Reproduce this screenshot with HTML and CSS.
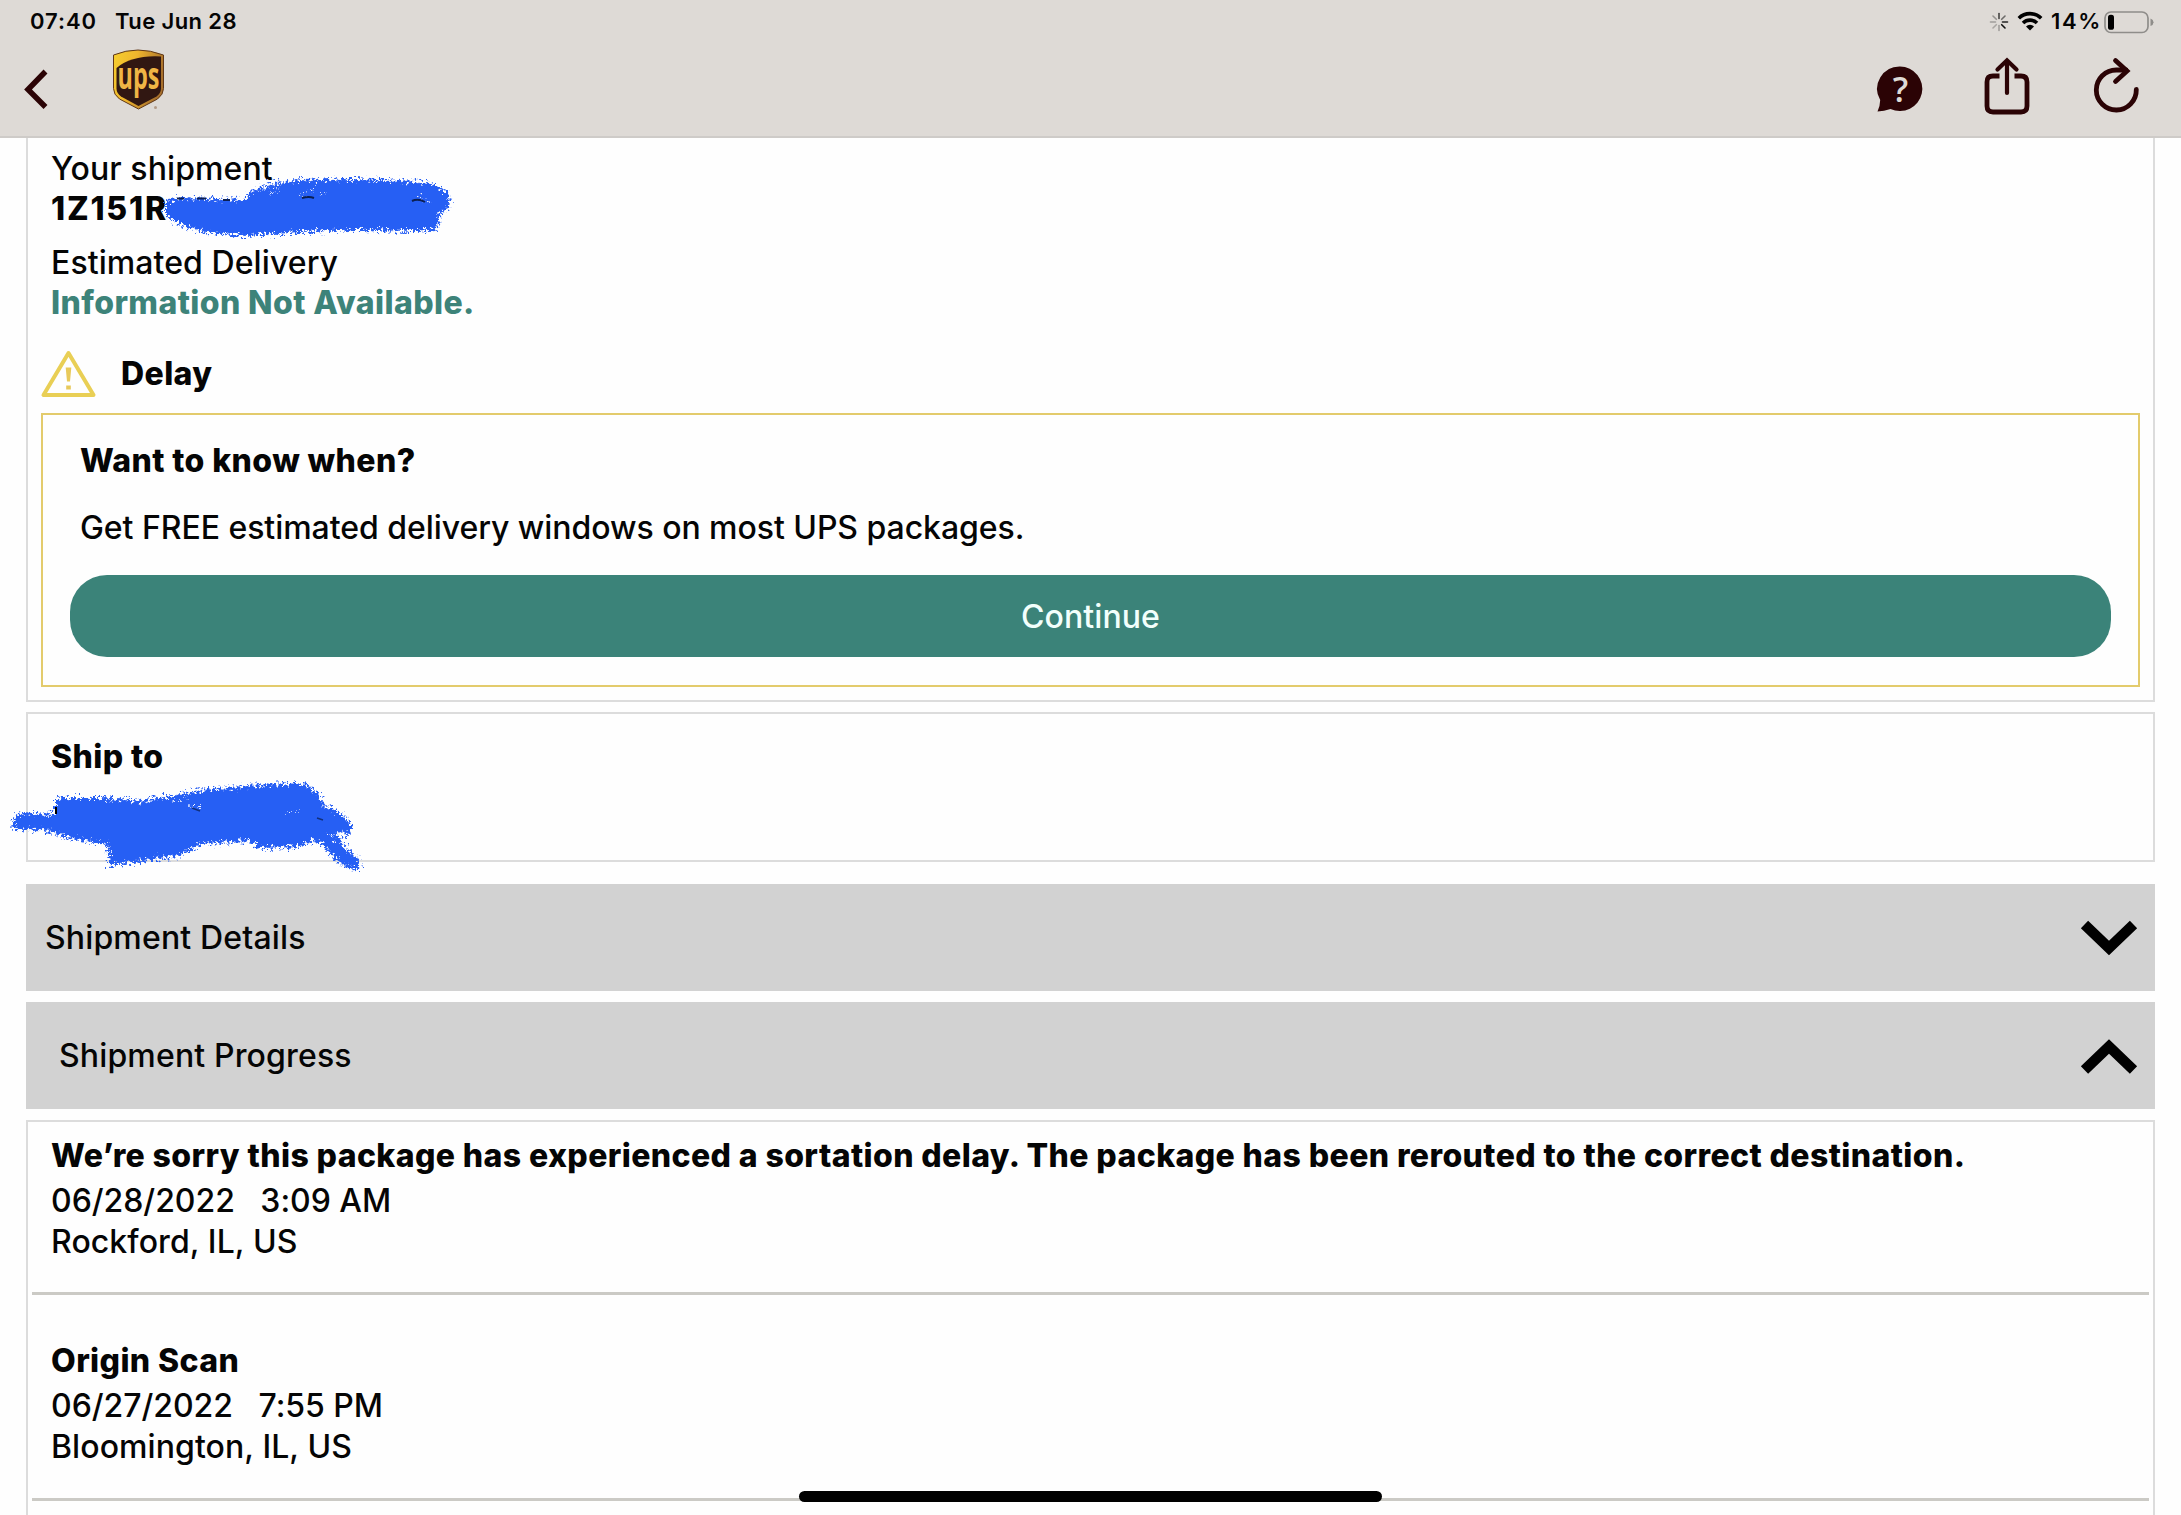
FILE: index.html
```html
<!DOCTYPE html>
<html lang="en">
<head>
    <meta charset="UTF-8">
    <meta name="viewport" content="width=device-width, initial-scale=1.0">
    <title>UPS Tracking</title>
    <link rel="stylesheet" href="styles.css">
</head>
<body>

    <header class="header">
        <div class="status-bar">
            <div class="status-left">
                <span class="time">07:40</span>
                <span class="date">Tue Jun 28</span>
            </div>
            <div class="status-right">
                <svg class="spinner" width="20" height="20" viewBox="0 0 20 20" stroke="#111" stroke-width="1.6" stroke-linecap="round">
                    <path d="M10 1.5v5" opacity=".75"/>
                    <path d="M16 4l-3.3 3.3" opacity=".55"/>
                    <path d="M18.5 10h-5" opacity=".9"/>
                    <path d="M16 16l-3.3-3.3"/>
                    <path d="M10 18.5v-5" opacity=".3"/>
                    <path d="M4 16l3.3-3.3" opacity=".25"/>
                    <path d="M1.5 10h5" opacity=".3"/>
                    <path d="M4 4l3.3 3.3" opacity=".35"/>
                </svg>
                <svg class="wifi" width="26" height="20" viewBox="0 0 26 20" fill="none" stroke="#000" stroke-width="3.6">
                    <path d="M1.8 7.2a16 16 0 0 1 22.4 0"/>
                    <path d="M6 12a10 10 0 0 1 14 0"/>
                    <path d="M13 19.5l-4-4a5.600 5.600 0 0 1 8 0z" fill="#000" stroke="none"/>
                </svg>
                <span class="percent">14%</span>
                <svg class="battery" width="50" height="23" viewBox="0 0 50 23">
                    <rect x="1" y="1" width="43" height="20.5" rx="6" fill="none" stroke="#8f8d8a" stroke-width="1.7"/>
                    <rect x="4" y="3.800" width="6" height="15" rx="2.600" fill="#000"/>
                    <path d="M46.500 7.500q3 1.200 3 3.800t-3 3.800z" fill="#8f8d8a"/>
                </svg>
            </div>
        </div>
        <nav class="nav-bar">
            <svg class="back" width="24" height="40" viewBox="0 0 24 40" fill="none" stroke="#2b0305" stroke-width="5.5">
                <path d="M21.500 2.500L4 20.500L21.500 38"/>
            </svg>
            <svg class="logo" width="54" height="62" viewBox="0 0 54 62">
                <defs>
                    <linearGradient id="gold" x1="0" y1="0" x2="1" y2="0.3">
                        <stop offset="0" stop-color="#f6cf2e"/>
                        <stop offset="0.45" stop-color="#efb52d"/>
                        <stop offset="1" stop-color="#a8702c"/>
                    </linearGradient>
                </defs>
                <path d="M1.500 6Q14 1 26 1t25.500 5v33.500q0 6-6 10.500L26.500 60L7.500 50q-6-4.500-6-10.500z" fill="url(#gold)" stroke="#5f3718" stroke-width="1"/>
                <path d="M4.500 19Q20 6 49 7.500v32q0 4.500-4.500 8L26.500 57L9 47.500q-4.500-3.500-4.500-8z" fill="#311712"/>
                <text x="5.500" y="39.500" class="logo-text" textLength="42" lengthAdjust="spacingAndGlyphs">ups</text>
                <circle cx="43.500" cy="58.500" r="1.500" fill="#b39c88"/>
            </svg>
            <div class="actions">
                <svg class="help" width="46" height="46" viewBox="0 0 46 46">
                    <path d="M23 .5a22.500 22.300 0 1 1-9.500 42.600Q7 45.500.5 45.500Q3 41 3.200 34A22.500 22.300 0 0 1 23 .5z" fill="#2b0305"/>
                    <text x="23.500" y="36" text-anchor="middle" class="help-text">?</text>
                </svg>
                <svg class="share" width="46" height="58" viewBox="0 0 46 58" fill="none" stroke="#2b0305" stroke-width="4.8">
                    <path d="M15.500 19H9q-6 0-6 6v24q0 6 6 6h28q6 0 6-6V25q0-6-6-6h-6.500"/>
                    <path d="M23 36V4M13.500 12.500L23 3.300l9.500 9.200" stroke-width="4.200" stroke-linecap="round"/>
                </svg>
                <svg class="refresh" width="46" height="56" viewBox="0 0 46 56" fill="none" stroke="#2b0305" stroke-width="4.8" stroke-linecap="round">
                    <path d="M42.300 32.500A20 20 0 1 1 22.500 13h9.500"/>
                    <path d="M21.500 3.500l11.500 10.500l-11.500 10.500"/>
                </svg>
            </div>
        </nav>
    </header>

    <main class="content">
        <section class="panel shipment">
            <p>Your shipment</p>
            <p class="bold tracking">1Z151R</p>
            <p class="estimated">Estimated Delivery</p>
            <p class="bold unavailable">Information Not Available.</p>
            <div class="delay">
                <svg class="warning" width="56" height="48" viewBox="0 0 56 48">
                    <path d="M27.500 3L2.500 45h50z" fill="none" stroke="#e9cf55" stroke-width="4" stroke-linejoin="round"/>
                    <path d="M24.700 17.500h5.600l-1.300 14h-3z" fill="#e8c95a"/>
                    <rect x="25.200" y="35.500" width="4.600" height="4" fill="#e8c95a"/>
                </svg>
                <p class="bold">Delay</p>
            </div>
            <div class="promo">
                <p class="bold">Want to know when?</p>
                <p class="promo-text">Get FREE estimated delivery windows on most UPS packages.</p>
                <button class="continue" type="button">Continue</button>
            </div>
            <svg class="scribble scribble-number" width="300" height="76" viewBox="160 168 300 76">
                <defs>
                    <filter id="rough" x="-10%" y="-20%" width="120%" height="140%">
                        <feTurbulence type="fractalNoise" baseFrequency="0.35" numOctaves="2" seed="4" result="noise"/>
                        <feDisplacementMap in="SourceGraphic" in2="noise" scale="14" xChannelSelector="R" yChannelSelector="G"/>
                    </filter>
                </defs>
                <g filter="url(#rough)">
                    <path d="M166 201l14-3l66 2l2-7l20-9l32-4l50-1l35 1l45 3l16 9l2 13l-10 7l-2 15l-20 2l-60-1l-56 2l-55 4l-37-3l-28-8l-14-9z" fill="#285ff4" stroke="#285ff4" stroke-width="4" stroke-dasharray="2 2"/>
                    <path d="M258 190l22-7M300 193l14-5M320 194l8-3M418 196l14 7M268 193l10-4" stroke="#fff" stroke-width="1.200" stroke-dasharray="2 3"/>
                </g>
                <path d="M176 197.500h7M196 197.500h9M222 199h7M301 197q7-2 12 0M411 200q6-3 13 1" fill="none" stroke="#0b1f52" stroke-width="2"/>
            </svg>
        </section>

        <section class="panel ship-to">
            <p class="bold">Ship to</p>
            <svg class="scribble scribble-address" width="370" height="100" viewBox="0 776 370 100">
                <g filter="url(#rough)">
                    <path d="M14 815l12-2l29 1v-16l46 0l40 3l60-11l70-6h33l15 13l2 9l14 4l14 14l-3 9l-14-3l10 17l15 14l-2 7l-14-4l-19-20l-10-6l-16 7l-38 1l-12-7l-45 3l-25 12l-67 9l-2-20l-40-7l-25-8l-31-1z" fill="#285ff4" stroke="#285ff4" stroke-width="4" stroke-dasharray="2 2"/>
                    <path d="M170 800l16-3M186 805l14 1M284 811l12-1M326 832l8 10" stroke="#fff" stroke-width="1.200" stroke-dasharray="2 3"/>
                </g>
                <path d="M54 806v7" stroke="#000" stroke-width="2"/>
                <path d="M190 807l8 3M315 817l6 2" stroke="#12307c" stroke-width="1.500"/>
            </svg>
        </section>

        <div class="bar details">
            <span>Shipment Details</span>
            <svg width="58" height="37" viewBox="0 0 58 37" fill="none" stroke="#000" stroke-width="10.5">
                <path d="M4.500 4.500L29 28L53.500 4.500"/>
            </svg>
        </div>
        <div class="bar progress">
            <span>Shipment Progress</span>
            <svg width="58" height="37" viewBox="0 0 58 37" fill="none" stroke="#000" stroke-width="10.5">
                <path d="M4.500 32L29 8.500L53.500 32"/>
            </svg>
        </div>

        <section class="panel events">
            <div class="event">
                <p class="bold">We’re sorry this package has experienced a sortation delay. The package has been rerouted to the correct destination.</p>
                <p class="event-time">06/28/2022&nbsp;&nbsp; 3:09 AM</p>
                <p>Rockford, IL, US</p>
            </div>
            <div class="event">
                <p class="bold">Origin Scan</p>
                <p class="event-time">06/27/2022&nbsp;&nbsp; 7:55 PM</p>
                <p>Bloomington, IL, US</p>
            </div>
        </section>
    </main>

    <div class="home-indicator"></div>

</body>
</html>
```
FILE: styles.css
```css
* {
    box-sizing: border-box;
}
body {
    font-family: Inter, 'Liberation Sans', sans-serif;
    font-size: 32px;
    font-weight: 500;
    line-height: 40px;
    letter-spacing: 0.08px;
    color: #050505;
    background-color: #fefefe;
    margin: 0;
    height: 1515px;
    overflow: hidden;
}
p {
    margin: 0;
}
svg {
    display: block;
    flex: none;
    overflow: visible;
}
.bold {
    font-weight: 800;
    letter-spacing: 0.4px;
}

/* header */
.header {
    height: 138px;
    background-color: #dedad6;
    border-bottom: 2px solid #cecbc8;
}
.status-bar {
    height: 44px;
    display: flex;
    justify-content: space-between;
    padding: 0 27px 0 30px;
    font-size: 22px;
    font-weight: 600;
    line-height: 43px;
}
.status-left {
    display: flex;
    gap: 18px;
}
.time {
    letter-spacing: 0.95px;
}
.date {
    letter-spacing: 0.4px;
}
.status-right {
    display: flex;
    align-items: flex-start;
}
.spinner {
    margin-top: 12px;
}
.wifi {
    margin: 11px 8px 0 8px;
}
.percent {
    letter-spacing: 1.6px;
    width: 53px;
}
.battery {
    margin-top: 11px;
}
.nav-bar {
    display: flex;
    align-items: flex-start;
    padding-left: 24px;
}
.back {
    margin: 25px 64px 0 0;
}
.logo {
    margin-top: 5px;
}
.logo-text {
    font-family: 'Open Sans', sans-serif;
    font-size: 37px;
    font-weight: 700;
    line-height: 1;
    fill: #f0b545;
}
.actions {
    display: flex;
    margin-left: auto;
    padding-right: 41px;
}
.help {
    margin: 22px 61px 0 0;
}
.help-text {
    font-family: 'Open Sans', sans-serif;
    font-size: 34px;
    font-weight: 600;
    fill: #dedad6;
}
.share {
    margin: 13px 64px 0 0;
}
.refresh {
    margin-top: 13px;
}

/* panels */
.content {
    padding: 0 26px;
}
.panel {
    position: relative;
    border: 2px solid #dcdcdc;
}
.shipment {
    height: 564px;
    border-top: none;
    padding: 11px 13px 0 23px;
}
.tracking {
    letter-spacing: 1.8px;
}
.estimated {
    margin-top: 14px;
}
.unavailable {
    color: #3d8379;
}
.delay {
    display: flex;
    align-items: center;
    gap: 24px;
    height: 48px;
    margin: 27px 0 0 -10px;
}
.promo {
    height: 274px;
    margin: 15px 0 0 -10px;
    padding: 26px 27px 0;
    border: 2px solid #e3cb6c;
}
.promo p {
    padding-left: 10px;
}
.promo-text {
    margin-top: 27px;
    letter-spacing: -0.05px;
}
.continue {
    display: block;
    width: 100%;
    height: 82px;
    margin-top: 27px;
    padding: 2px 0 0;
    border: none;
    border-radius: 37px;
    background-color: #3b8379;
    color: #f2fffc;
    font: inherit;
    letter-spacing: inherit;
}
.ship-to {
    height: 150px;
    margin-top: 10px;
    padding: 23px 23px 0;
}

/* marker strokes that cover the private data */
.scribble {
    position: absolute;
    overflow: visible;
}
.scribble-number {
    left: 133px;
    top: 31px;
}
.scribble-address {
    left: -26px;
    top: 63px;
}

/* collapsible bars */
.bar {
    display: flex;
    align-items: center;
    justify-content: space-between;
    height: 107px;
    padding: 1px 17px 0 19px;
    background-color: #d2d2d2;
    letter-spacing: 0.15px;
}
.details {
    margin-top: 22px;
}
.progress {
    margin: 11px 0;
    padding-left: 33px;
}

/* tracking events */
.events {
    height: 410px;
    padding: 14px 4px 0;
}
.event {
    height: 206px;
    padding-left: 19px;
    border-bottom: 3px solid #cbcac5;
}
.event:first-child {
    height: 159px;
}
.event:last-child {
    padding-top: 46px;
}
.event-time {
    margin-top: 5px;
    margin-bottom: 1px;
    letter-spacing: -0.03px;
}

.home-indicator {
    position: absolute;
    left: 799px;
    top: 1491px;
    width: 583px;
    height: 11px;
    border-radius: 6px;
    background-color: #000;
}
```
